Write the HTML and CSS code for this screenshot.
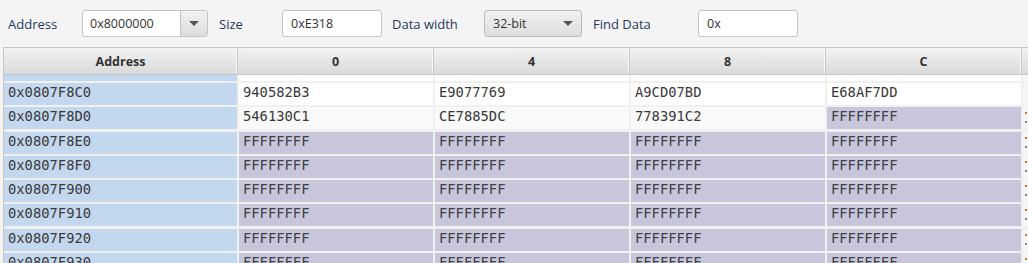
FILE: index.html
```html
<!DOCTYPE html>
<html lang="en">
<head>
    <meta charset="UTF-8">
    <title>Memory View</title>
    <link rel="stylesheet" href="styles.css">
</head>
<body>
    <div class="toolbar">
        <span class="label lbl-address">Address</span>
        <div class="combo editable w-address">
            <span class="combo-text">0x8000000</span>
            <span class="arrow-btn"><span class="arrow"></span></span>
        </div>
        <span class="label lbl-size">Size</span>
        <div class="field w-size">0xE318</div>
        <span class="label lbl-width">Data width</span>
        <div class="combo button w-width">
            <span class="combo-text">32-bit</span>
            <span class="arrow-plain"><span class="arrow"></span></span>
        </div>
        <span class="label lbl-find">Find Data</span>
        <div class="field w-find">0x</div>
    </div>

    <div class="table">
        <div class="head">Address</div>
        <div class="head">0</div>
        <div class="head">4</div>
        <div class="head">8</div>
        <div class="head">C</div>
        <div class="head last"></div>
    </div>
    <div class="grid" id="grid"></div>

    <script>
        const grid = document.querySelector('#grid');
        const rows = [
            ['', '', '', '', ''],
            ['0x0807F8C0', '940582B3', 'E9077769', 'A9CD07BD', 'E68AF7DD'],
            ['0x0807F8D0', '546130C1', 'CE7885DC', '778391C2', 'FFFFFFFF'],
            ['0x0807F8E0', 'FFFFFFFF', 'FFFFFFFF', 'FFFFFFFF', 'FFFFFFFF'],
            ['0x0807F8F0', 'FFFFFFFF', 'FFFFFFFF', 'FFFFFFFF', 'FFFFFFFF'],
            ['0x0807F900', 'FFFFFFFF', 'FFFFFFFF', 'FFFFFFFF', 'FFFFFFFF'],
            ['0x0807F910', 'FFFFFFFF', 'FFFFFFFF', 'FFFFFFFF', 'FFFFFFFF'],
            ['0x0807F920', 'FFFFFFFF', 'FFFFFFFF', 'FFFFFFFF', 'FFFFFFFF'],
            ['0x0807F930', 'FFFFFFFF', 'FFFFFFFF', 'FFFFFFFF', 'FFFFFFFF']
        ];

        rows.forEach((row, i) => {
            row.forEach((value, col) => {
                const cell = document.createElement('div');
                cell.classList.add('cell');
                if (i === 0) cell.classList.add('stub');
                if (col === 0) cell.classList.add('addr');
                else if (value === 'FFFFFFFF') cell.classList.add('blank');
                else if (i === 2) cell.classList.add('odd');
                else cell.classList.add('data');
                cell.textContent = value;
                grid.appendChild(cell);
            });
            // ascii column, cut off at the window edge
            const ascii = document.createElement('div');
            ascii.classList.add('cell', 'ascii');
            if (i === 0) ascii.classList.add('stub');
            if (i > 1) ascii.classList.add('dots');
            grid.appendChild(ascii);
        });
    </script>
</body>
</html>
```

FILE: styles.css
```css
body {
    margin: 0;
    background-color: #f4f4f4;
    font-family: 'Open Sans', sans-serif;
    font-size: 13px;
    overflow: hidden;
    height: 263px;
}
.toolbar {
    display: flex;
    align-items: center;
    height: 47px;
    padding-left: 8px;
}
.label {
    color: #1f3a5c;
    line-height: 20px;
}
.lbl-address { width: 74px; }
.lbl-size { width: 63px; margin-left: 11px; }
.lbl-width { width: 92px; margin-left: 10px; }
.lbl-find { width: 105px; margin-left: 11px; }

.combo, .field {
    box-sizing: border-box;
    height: 27px;
    border: 1px solid #c4c4c4;
    border-radius: 3px;
    display: flex;
    align-items: center;
    color: #333;
    font-size: 12.5px;
}
.field {
    background: #fff;
    padding-left: 8px;
}
.w-address { width: 126px; background: #fff; }
.w-size { width: 100px; }
.w-width { width: 98px; }
.w-find { width: 100px; }

.combo-text {
    flex: 1;
    padding-left: 7px;
}
.combo.button {
    background: linear-gradient(#f1f1f1, #dedede);
    border-color: #bdbdbd;
}
.combo.button .combo-text { padding-left: 8px; }
.arrow-btn {
    width: 26px;
    height: 100%;
    border-left: 1px solid #c4c4c4;
    background: linear-gradient(#f1f1f1, #dcdcdc);
    border-radius: 0 2px 2px 0;
    display: flex;
    align-items: center;
    justify-content: center;
}
.arrow-plain {
    width: 26px;
    display: flex;
    justify-content: center;
}
.arrow {
    width: 0;
    height: 0;
    border-left: 5px solid transparent;
    border-right: 5px solid transparent;
    border-top: 5px solid #555;
}

.table {
    margin-left: 3px;
    display: grid;
    grid-template-columns: 234px 196px 196px 196px 196px 1fr;
    border-top: 1px solid #c6c6c6;
    border-left: 1px solid #c6c6c6;
    border-bottom: 1px solid #c6c6c6;
    background: linear-gradient(#f2f2f2, #dadada);
}
.head {
    height: 26px;
    line-height: 28px;
    text-align: center;
    font-weight: 700;
    font-size: 12.5px;
    color: #333;
    border-right: 1px solid #c8c8c8;
    box-shadow: inset -1px 0 0 #f6f6f6;
}
.head.last { border-right: none; box-shadow: none; }

.grid {
    margin-left: 3px;
    border-left: 1px solid #c6c6c6;
    display: grid;
    grid-template-columns: 233px 194px 194px 194px 194px 1fr;
    gap: 2px;
    background: #f0f0f0;
    height: 200px;
}
.cell {
    height: 22px;
    line-height: 18px;
    padding-left: 4px;
    font-family: 'DejaVu Sans Mono', monospace;
    font-size: 13.8px;
    color: #3a3a3a;
    white-space: nowrap;
    overflow: hidden;
}
.cell.stub { height: 6px; }
.addr { background: #c3d8ee; }
.data { background: #ffffff; }
.odd { background: #f9f9f9; }
.blank { background: #c8c6da; color: #404048; }
.ascii {
    background: #f6f6f6;
    padding-left: 0;
}
.dots {
    background:
        radial-gradient(circle, #c8783c 1px, transparent 1.5px) 1px 4px / 4px 4px no-repeat,
        radial-gradient(circle, #888 1px, transparent 1.5px) 1px 13px / 4px 4px no-repeat,
        #f6f6f6;
}
```
